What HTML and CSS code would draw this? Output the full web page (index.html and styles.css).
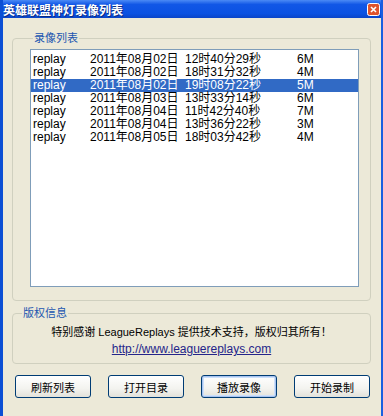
FILE: index.html
```html
<!DOCTYPE html>
<html lang="zh-CN">

<head>
    <meta charset="UTF-8">
    <title>英雄联盟神灯录像列表</title>
    <link rel="stylesheet" href="styles.css">
</head>

<body>
    <div class="window">
        <div class="titlebar">
            <span class="title">英雄联盟神灯录像列表</span>
            <span class="close">
                <svg width="13" height="13" viewBox="0 0 13 13">
                    <rect x="0.5" y="0.5" width="12" height="12" rx="2" fill="#e0542c" stroke="#fff"/>
                    <path d="M4 4 L9 9 M9 4 L4 9" stroke="#fff" stroke-width="1.6"/>
                </svg>
            </span>
        </div>

        <div class="content">
            <fieldset class="group list-group">
                <legend>录像列表</legend>
                <div class="listbox">
                    <div class="row"><span>replay</span><span>2011年08月02日</span><span>12时40分29秒</span><span>6M</span></div>
                    <div class="row"><span>replay</span><span>2011年08月02日</span><span>18时31分32秒</span><span>4M</span></div>
                    <div class="row selected"><span>replay</span><span>2011年08月02日</span><span>19时08分22秒</span><span>5M</span></div>
                    <div class="row"><span>replay</span><span>2011年08月03日</span><span>13时33分14秒</span><span>6M</span></div>
                    <div class="row"><span>replay</span><span>2011年08月04日</span><span>11时42分40秒</span><span>7M</span></div>
                    <div class="row"><span>replay</span><span>2011年08月04日</span><span>13时36分22秒</span><span>3M</span></div>
                    <div class="row"><span>replay</span><span>2011年08月05日</span><span>18时03分42秒</span><span>4M</span></div>
                </div>
            </fieldset>

            <fieldset class="group info-group">
                <legend>版权信息</legend>
                <p class="thanks">特别感谢 LeagueReplays 提供技术支持，版权归其所有！</p>
                <p class="link"><a href="#">http://www.leaguereplays.com</a></p>
            </fieldset>

            <div class="buttons">
                <button type="button">刷新列表</button>
                <button type="button">打开目录</button>
                <button type="button" class="default">播放录像</button>
                <button type="button">开始录制</button>
            </div>
        </div>
    </div>
</body>

</html>
```

FILE: styles.css
```css
body {
    margin: 0;
    font-family: "Liberation Sans", "Noto Sans CJK SC", sans-serif;
    font-size: 12px;
    color: #000;
}

.window {
    width: 383px;
    height: 416px;
    box-sizing: border-box;
    background-color: #ece9d8;
    border-left: 3px solid #0b4fd4;
    border-right: 2px solid #1a5fe0;
    overflow: hidden;
}

.titlebar {
    height: 18px;
    display: flex;
    justify-content: space-between;
    align-items: center;
    padding: 0 1px 0 0;
    background: linear-gradient(#4b8af5, #1157e6 25%, #0b52e2 75%, #0a45c8);
}

.title {
    color: #fff;
    font-weight: bold;
    font-size: 12px;
    text-shadow: 1px 1px 0 #0a2a80;
}

.close {
    display: flex;
}

.content {
    padding: 0 10px 0 9px;
}

.group {
    margin: 0;
    border: 1px solid #d0d0bf;
    border-radius: 4px;
    min-width: 0;
}

.group legend {
    padding: 0 1px;
    margin-left: 3px;
    line-height: 14px;
    font-size: 11px;
    color: #2256b0;
}

.list-group {
    margin-top: 13px;
    padding: 4px 11px 13px 17px;
}

.listbox {
    height: 238px;
    box-sizing: border-box;
    border: 1px solid #7f9db9;
    background-color: #fff;
    padding-top: 3px;
}

.row {
    display: grid;
    grid-template-columns: 57px 95px 112px 1fr;
    height: 13px;
    line-height: 13px;
    padding-left: 2px;
    white-space: nowrap;
}

.selected {
    background-color: #316ac5;
    color: #fff;
}

.info-group {
    margin-top: 5px;
    padding: 4px 6px 5px 6px;
}

.info-group p {
    margin: 0;
    line-height: 17px;
    text-align: center;
    font-size: 11px;
}

.link a {
    color: #25258a;
    font-size: 12px;
}

.buttons {
    display: flex;
    gap: 17px;
    margin-top: 11px;
    padding-left: 3px;
}

button {
    width: 76px;
    height: 23px;
    padding: 0;
    font-family: inherit;
    font-size: 11px;
    color: #000;
    border: 1px solid #003c74;
    border-radius: 3px;
    background: linear-gradient(#ffffff, #f3f3ef 60%, #e3e2da);
    cursor: pointer;
}

.default {
    box-shadow: inset 0 0 0 1px #a8c4f0, inset 0 0 0 2px #cde0fa;
}
```
